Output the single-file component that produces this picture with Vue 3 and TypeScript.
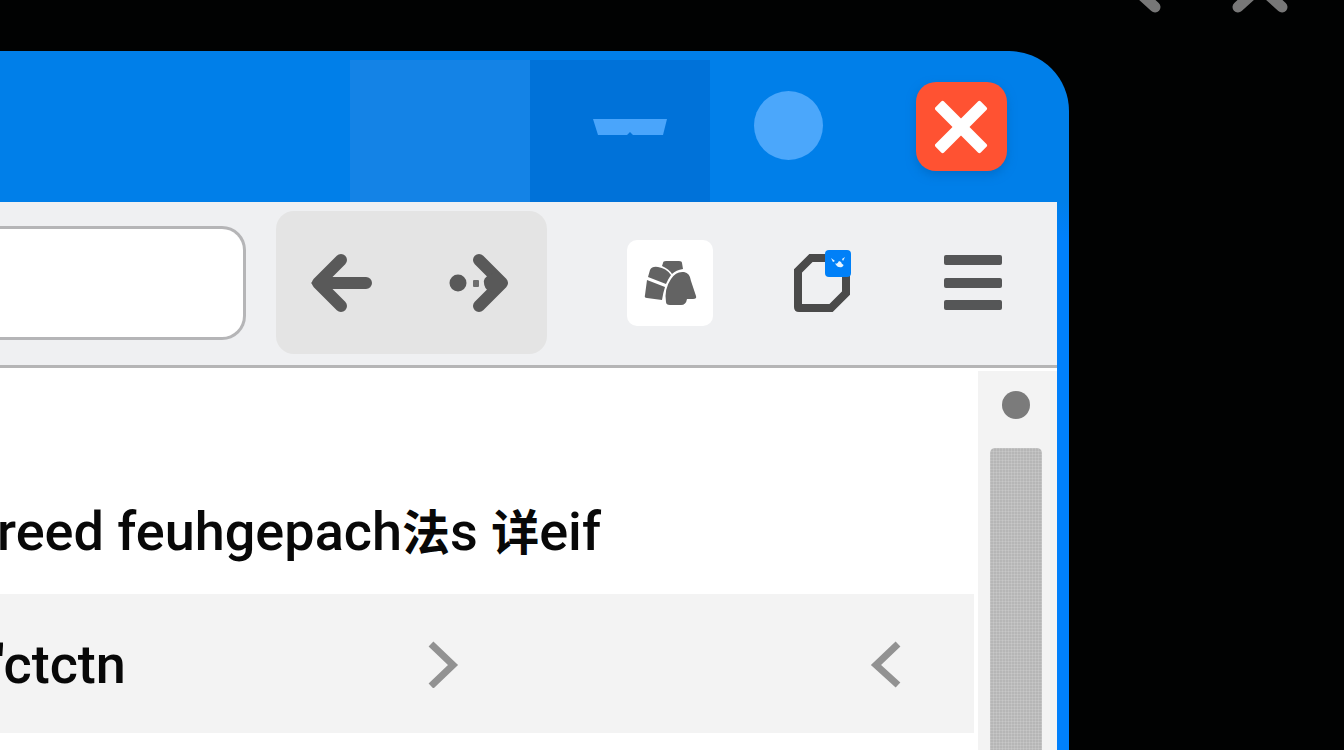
<script setup lang="ts">
import { ref } from 'vue'

const address = ref<string>('')
</script>

<template>
  <div class="desktop">
    <header class="backdrop-controls">
      <button class="plain" type="button" aria-label="Previous">
        <svg width="40" height="16" viewBox="0 0 40 16">
          <path d="M2 -14 L25 7" />
        </svg>
      </button>
      <button class="plain" type="button" aria-label="Dismiss">
        <svg width="60" height="16" viewBox="0 0 60 16">
          <path d="M8 7 L30 -13 L52 7" />
        </svg>
      </button>
    </header>

    <main class="window">
      <div class="titlebar">
        <span class="tab tab-light"></span>
        <button class="plain tab tab-dark" type="button" aria-label="Minimize">
          <svg width="76" height="18" viewBox="0 0 76 18">
            <path d="M1 1 H75 L71 17 H41 L38 14 L35 17 H6 Z" fill="#4aa5fb" />
          </svg>
        </button>
        <button class="plain bubble" type="button" aria-label="Maximize"></button>
        <button class="plain close" type="button" aria-label="Close">
          <svg width="54" height="54" viewBox="0 0 54 54">
            <g fill="#fff" transform="rotate(45 26 27)">
              <rect x="-6" y="21" width="64" height="12" rx="2" />
              <rect x="20" y="-5" width="12" height="64" rx="2" />
            </g>
          </svg>
        </button>
      </div>

      <div class="toolbar">
        <input v-model="address" class="address" type="text" aria-label="Address" />
        <div class="history">
          <button class="plain" type="button" aria-label="Back">
            <svg width="66" height="60" viewBox="0 0 66 60">
              <path class="arrow" d="M30 7 L7 30 L30 53 M8 30 H55" />
              <path d="M0 30 L12 18 V42 Z" fill="#595959" />
            </svg>
          </button>
          <button class="plain" type="button" aria-label="Forward">
            <svg width="62" height="60" viewBox="0 0 62 60">
              <circle cx="10" cy="30" r="8.500" fill="#595959" />
              <rect x="25" y="27" width="6" height="7" rx="1" fill="#6d6d6d" />
              <path class="arrow" d="M31 7 L54 30 L31 53" />
              <path d="M60 30 L49 19 L41 22 Q35 25 36 30 Q36 35 41 38 L49 41 Z" fill="#595959" />
            </svg>
          </button>
        </div>
        <button class="plain tile" type="button" aria-label="Collection">
          <svg width="54" height="46" viewBox="0 0 54 46">
            <g fill="#636363">
              <path d="M20 3 Q20 1 23 1 H36 Q39 1 39 3 L40 9 Q33 10 29 14 Q26 9 19 6 Z" />
              <path d="M7 10 Q9 6 15 7 Q23 8 28 15 Q25 19 23 24 L5 17 Z" />
              <path d="M4 20 L22 27 Q20 33 19 40 L4 38 Q1 38 2 35 Z" />
              <path d="M23 42 Q21 29 28 19 Q33 11 41 12 Q47 13 48 21 L53 36 Q54 39 50 39 H44 Q43 45 38 45 H27 Q23 45 23 42 Z" />
            </g>
          </svg>
        </button>
        <button class="plain notes" type="button" aria-label="Notes">
          <svg width="58" height="64" viewBox="0 0 58 64">
            <path
              d="M33 9 H18 L5 22 V58 Q5 59 6 59 H38 L53 44 V27"
              fill="none"
              stroke="#4a4a4a"
              stroke-width="8"
            />
            <rect x="32" y="1" width="26" height="27" rx="4" fill="#0080f8" />
            <path d="M42 14 Q44 16 46 12 L48 13 L49 15 Q52 16 49 18 Q45 19 43 16 Z M38 9 L42 12 L40 13 Z M49 10 L52 8 L50 12 Z" fill="#e6f4ff" />
          </svg>
        </button>
        <button class="plain" type="button" aria-label="Menu">
          <svg width="58" height="58" viewBox="0 0 58 58">
            <g fill="#555657">
              <rect y="1" width="58" height="10" rx="2" />
              <rect y="24" width="58" height="10" rx="2" />
              <rect y="46" width="58" height="10" rx="2" />
            </g>
          </svg>
        </button>
      </div>

      <div class="body">
        <section class="content">
          <h1 class="heading">
            <span>freed feuhgepach<span class="han">法</span>s <span class="han">详</span>eif</span>
          </h1>
          <div class="row">
            <span class="label">'ctctn</span>
            <button class="plain next" type="button" aria-label="Expand">
              <svg width="32" height="48" viewBox="0 0 32 48">
                <path d="M4 4 L26 25 L4 46" />
              </svg>
            </button>
            <button class="plain" type="button" aria-label="Collapse">
              <svg width="32" height="48" viewBox="0 0 32 48">
                <path d="M29 4 L7 25 L29 45" />
              </svg>
            </button>
          </div>
        </section>
        <aside class="scrollbar">
          <span class="scroll-dot"></span>
          <span class="scroll-thumb"></span>
        </aside>
      </div>
    </main>
  </div>
</template>

<style>
body {
  background: #010202;
}
</style>

<style scoped>
.desktop {
  display: flex;
  flex-direction: column;
  height: 100vh;
  overflow: hidden;
  background: #010202;
  font-family: Roboto, "Liberation Sans", "Noto Sans CJK SC", sans-serif;
}

.plain {
  display: flex;
  align-items: center;
  justify-content: center;
  padding: 0;
  border: 0;
  background: none;
}

svg {
  display: block;
}

.backdrop-controls {
  display: flex;
  flex: none;
  justify-content: flex-end;
  align-items: flex-start;
  gap: 60px;
  height: 51px;
  padding-right: 54px;
}

.backdrop-controls path {
  fill: none;
  stroke: #777;
  stroke-width: 11;
  stroke-linecap: round;
}

.window {
  display: flex;
  flex: 1;
  flex-direction: column;
  min-height: 0;
  margin-right: 275px;
  padding-right: 12px;
  border-radius: 0 60px 0 0;
  background: linear-gradient(#007fe9 0, #007fe9 150px, #0080fc 190px);
}

.titlebar {
  display: flex;
  flex: none;
  align-items: center;
  justify-content: flex-end;
  height: 151px;
  padding-right: 50px;
}

.tab {
  align-self: flex-end;
  width: 180px;
  height: 142px;
}

.tab-light {
  background: #1483e6;
}

.tab-dark {
  box-sizing: border-box;
  padding: 0 0 8px 20px;
  background: #0072d9;
}

.bubble {
  width: 69px;
  height: 69px;
  margin: 0 93px 2px 44px;
  border-radius: 50%;
  background: #4ba7fb;
}

.close {
  width: 91px;
  height: 89px;
  border-radius: 20px;
  background: #ff5232;
  box-shadow: 0 4px 10px #0060b080;
}

.toolbar {
  display: flex;
  flex: none;
  align-items: center;
  box-sizing: border-box;
  height: 166px;
  padding: 0 55px 2px 0;
  border-bottom: 3px solid #b5b5b6;
  background: #eff0f2;
}

.address {
  box-sizing: border-box;
  flex: 1;
  min-width: 0;
  height: 114px;
  margin-right: 30px;
  padding: 0 24px;
  border: 3px solid #b5b5b7;
  border-left: 0;
  border-radius: 0 24px 24px 0;
  background: #fff;
  font: inherit;
  font-size: 48px;
}

.history {
  display: flex;
  width: 271px;
  height: 143px;
  margin-right: 80px;
  border-radius: 18px;
  background: #e4e4e4;
}

.history > .plain {
  flex: 1;
}

.arrow {
  fill: none;
  stroke: #595959;
  stroke-width: 12;
  stroke-linecap: round;
  stroke-linejoin: round;
}

.tile {
  width: 86px;
  height: 86px;
  margin-right: 80px;
  border-radius: 10px;
  background: #fff;
}

.notes {
  margin-right: 93px;
  padding-bottom: 4px;
}

.body {
  display: flex;
  flex: 1;
  min-height: 0;
  background: #fff;
}

.content {
  flex: 1;
  min-width: 0;
  margin-right: 4px;
}

.heading {
  box-sizing: border-box;
  display: flex;
  align-items: flex-end;
  height: 226px;
  margin: 0;
  padding-bottom: 32px;
  color: #080808;
  font-size: 54px;
  font-weight: 500;
  line-height: 60px;
  white-space: nowrap;
}

.heading > span {
  margin-left: -22px;
}

.han {
  font-family: "Noto Sans CJK SC", sans-serif;
  font-size: 48px;
  font-weight: 700;
  line-height: 48px;
}

.row {
  display: flex;
  align-items: center;
  height: 139px;
  padding-right: 73px;
  background: #f3f3f3;
}

.row path {
  fill: none;
  stroke: #929292;
  stroke-width: 7;
}

.label {
  width: 431px;
  margin-left: -4px;
  padding-top: 2px;
  color: #080808;
  font-size: 54px;
  font-weight: 500;
  line-height: 60px;
}

.next {
  margin-right: auto;
}

.scrollbar {
  display: flex;
  flex: none;
  flex-direction: column;
  align-items: center;
  box-sizing: border-box;
  width: 79px;
  margin-top: 3px;
  padding: 20px 4px 0 0;
  background: #f3f3f3;
}

.scroll-dot {
  width: 28px;
  height: 28px;
  margin-bottom: 29px;
  border-radius: 50%;
  background: #7b7b7b;
}

.scroll-thumb {
  flex: 1;
  width: 52px;
  border-radius: 5px 5px 0 0;
  background:
    repeating-linear-gradient(90deg, #ffffff22 0 1px, #00000000 1px 3px),
    repeating-linear-gradient(#ffffff22 0 1px, #00000000 1px 3px),
    #b6b6b6;
}
</style>
